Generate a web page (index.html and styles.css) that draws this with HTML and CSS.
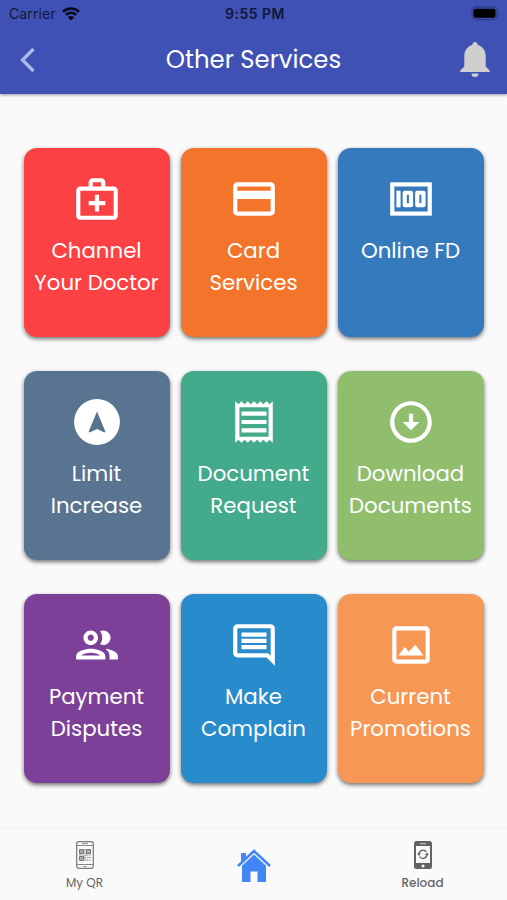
FILE: index.html
```html
<!DOCTYPE html>
<html lang="en">
<head>
    <meta charset="UTF-8">
    <meta name="viewport" content="width=device-width, initial-scale=1.0">
    <title>Other Services</title>
    <link rel="stylesheet" href="styles.css">
</head>
<body>

    <header class="header">
        <div class="status-bar">
            <div class="carrier">
                <span>Carrier</span>
                <svg width="18" height="14" viewBox="0 0 18 14">
                    <path d="M1 4.8a11.5 11.5 0 0 1 16 0M3.8 7.9a7.5 7.5 0 0 1 10.4 0" fill="none" stroke="#080a1c" stroke-width="2.5"/>
                    <path d="M5.8 10.2a4.6 4.6 0 0 1 6.4 0L9 13.5z" fill="#080a1c"/>
                </svg>
            </div>
            <span class="time">9:55 PM</span>
            <svg class="battery" width="30" height="15" viewBox="0 0 30 15">
                <rect x="1" y="1" width="25" height="12.5" rx="4" fill="none" stroke="#2f3c85" stroke-width="1.3"/>
                <rect x="2.5" y="2.7" width="22" height="9" rx="2" fill="#000"/>
                <path d="M27.5 5.2a2.5 2.5 0 0 1 0 4z" fill="#2f3c85"/>
            </svg>
        </div>
        <div class="title-bar">
            <svg class="back" width="16" height="26" viewBox="0 0 16 26">
                <path d="M13.5 2L2.5 13l11 11" fill="none" stroke="#a9b9ee" stroke-width="3.3"/>
            </svg>
            <h1>Other Services</h1>
            <svg class="bell" width="30" height="36" viewBox="0 0 30 36">
                <path d="M15 0a2.6 2.6 0 0 1 2.6 3c5 1.3 8.1 5.5 8.1 11v10.5l4 4V30H.3v-1.5l4-4V14c0-5.5 3.1-9.7 8.1-11A2.6 2.6 0 0 1 15 0zM11.5 31.5h7a3.5 3.5 0 0 1-7 0z" fill="#cfcfcf"/>
            </svg>
        </div>
    </header>

    <main class="services">
        <a class="card red">
            <svg class="icon" viewBox="0 0 24 24"><path d="M20 6h-4V4c0-1.1-.9-2-2-2h-4c-1.1 0-2 .9-2 2v2H4c-1.1 0-2 .9-2 2v12c0 1.1.9 2 2 2h16c1.1 0 2-.9 2-2V8c0-1.1-.9-2-2-2zM10 4h4v2h-4V4zm10 16H4V8h16v12zM11 10h2v3h3v2h-3v3h-2v-3H8v-2h3z"/></svg>
            <span>Channel<br>Your Doctor</span>
        </a>
        <a class="card orange">
            <svg class="icon" viewBox="0 0 24 24"><path d="M20 4H4c-1.11 0-2 .89-2 2v12c0 1.11.89 2 2 2h16c1.11 0 2-.89 2-2V6c0-1.11-.89-2-2-2zm0 14H4v-6h16v6zm0-10H4V6h16v2z"/></svg>
            <span>Card<br>Services</span>
        </a>
        <a class="card blue">
            <svg class="icon outline" viewBox="0 0 24 24">
                <rect x="3" y="5" width="18" height="14"/>
                <path d="M6 8v8"/>
                <rect x="9" y="9" width="3" height="6" stroke-linejoin="round"/>
                <rect x="15" y="9" width="3" height="6" stroke-linejoin="round"/>
            </svg>
            <span>Online FD</span>
        </a>
        <a class="card slate">
            <svg class="icon" viewBox="0 0 24 24"><path d="M12 1a11 11 0 1 0 0 22 11 11 0 1 0 0-22zm3.57 16L12 15.4 8.43 17 8 16.57 12 7l4 9.57-.43.43z"/></svg>
            <span>Limit<br>Increase</span>
        </a>
        <a class="card teal">
            <svg class="icon" viewBox="0 0 24 24"><path d="M19.5 3.5L18 2l-1.5 1.5L15 2l-1.5 1.5L12 2l-1.5 1.5L9 2 7.5 3.5 6 2 4.5 3.5 3 2v20l1.5-1.5L6 22l1.5-1.5L9 22l1.5-1.5L12 22l1.5-1.5L15 22l1.5-1.5L18 22l1.5-1.5L21 22V2l-1.5 1.5zM19 19.09H5V4.91h14v14.18zM6 15h12v2H6zm0-4h12v2H6zm0-4h12v2H6z"/></svg>
            <span>Document<br>Request</span>
        </a>
        <a class="card green">
            <svg class="icon" viewBox="0 0 24 24"><path d="M12 4c4.41 0 8 3.59 8 8s-3.59 8-8 8-8-3.59-8-8 3.59-8 8-8m0-2C6.48 2 2 6.48 2 12s4.48 10 10 10 10-4.48 10-10S17.52 2 12 2zm1 10V8h-2v4H8l4 4 4-4h-3z"/></svg>
            <span>Download<br>Documents</span>
        </a>
        <a class="card purple">
            <svg class="icon" viewBox="0 0 24 24"><path d="M9 13.75c-2.34 0-7 1.17-7 3.5V19h14v-1.75c0-2.33-4.66-3.5-7-3.5zM4.34 17c.84-.58 2.87-1.25 4.66-1.25s3.82.67 4.66 1.25H4.34zM9 12c1.93 0 3.5-1.57 3.5-3.5S10.93 5 9 5 5.5 6.57 5.5 8.5 7.07 12 9 12zm0-5c.83 0 1.5.67 1.5 1.5S9.83 10 9 10s-1.5-.67-1.5-1.5S8.17 7 9 7zm7.04 6.81c1.16.84 1.96 1.96 1.96 3.44V19h4v-1.75c0-2.02-3.5-3.17-5.96-3.44zM15 12c1.93 0 3.5-1.57 3.5-3.5S16.93 5 15 5c-.54 0-1.04.13-1.5.35.63.89 1 1.98 1 3.15s-.37 2.26-1 3.15c.46.22.96.35 1.5.35z"/></svg>
            <span>Payment<br>Disputes</span>
        </a>
        <a class="card sky">
            <svg class="icon" viewBox="0 0 24 24"><path d="M22 4c0-1.1-.9-2-2-2H4c-1.1 0-2 .9-2 2v12c0 1.1.9 2 2 2h14l4 4V4zM20 4v13.17L18.83 16H4V4h16zM6 12h12v2H6zm0-3h12v2H6zm0-3h12v2H6z"/></svg>
            <span>Make<br>Complain</span>
        </a>
        <a class="card peach">
            <svg class="icon" viewBox="0 0 24 24"><path d="M19 5v14H5V5h14m0-2H5c-1.1 0-2 .9-2 2v14c0 1.1.9 2 2 2h14c1.1 0 2-.9 2-2V5c0-1.1-.9-2-2-2zM6 17l3-4 1.85 2.2L14.1 11.86 18 17z"/></svg>
            <span>Current<br>Promotions</span>
        </a>
    </main>

    <nav class="tab-bar">
        <a class="tab">
            <svg width="18" height="28" viewBox="0 0 18 28">
                <rect x=".7" y=".7" width="16.6" height="26.6" rx="2.2" fill="none" stroke="#777" stroke-width="1.2"/>
                <path d="M1 4.5h16M1 23.5h16M6 2.6h6M7.5 25.5h3" stroke="#888" stroke-width="1"/>
                <path d="M3.5 8.5h4v4h-4zM10.5 8.5h4v4h-4zM3.5 15.5h4v4h-4z" fill="#aaa" stroke="#777"/>
                <path d="M9 8v12M10 14h5M11 16.5h4M10 19h5M3 14h5" stroke="#888" stroke-width="1.2" stroke-dasharray="2 .7"/>
            </svg>
            <span>My QR</span>
        </a>
        <a class="tab home">
            <svg width="34" height="33" viewBox="0 0 34 33">
                <path d="M4 4h5v4.5L4 13.5z" fill="#4285f4"/>
                <path d="M1 17L17 2l16 15" fill="none" stroke="#4285f4" stroke-width="2.6"/>
                <path d="M17 5.5l12 11.3V33h-8.5V22.5h-7V33H5V16.8z" fill="#4285f4"/>
            </svg>
        </a>
        <a class="tab reload">
            <svg width="18" height="28" viewBox="0 0 18 28">
                <path d="M2.5 0h13A2.5 2.5 0 0 1 18 2.5v23a2.5 2.5 0 0 1-2.5 2.5h-13A2.5 2.5 0 0 1 0 25.5v-23A2.5 2.5 0 0 1 2.5 0z" fill="#636363"/>
                <path d="M2 5h14v17H2z" fill="#fafafa"/>
                <path d="M6 2.7h6" stroke="#ccc" stroke-width="1"/>
                <circle cx="9" cy="25" r="1.5" fill="#fafafa"/>
                <path d="M5 13.2a4 4 0 0 1 7.4-2.2M13 13.3a4 4 0 0 1-7.4 2.2" fill="none" stroke="#636363" stroke-width="1.3"/>
                <path d="M3 12.5h4l-2 2.6zM11 14h4l-2-2.6z" fill="#636363"/>
            </svg>
            <span>Reload</span>
        </a>
    </nav>

</body>
</html>
```
FILE: styles.css
```css
* {
    box-sizing: border-box;
}

body {
    margin: 0;
    height: 900px;
    display: flex;
    flex-direction: column;
    font-family: 'Poppins', 'Inter', sans-serif;
    background-color: #fafafa;
    overflow: hidden;
}

.header {
    height: 94px;
    background-color: #3f51b5;
    box-shadow: 0 1px 3px rgba(0, 0, 0, 0.4);
}

.status-bar {
    display: grid;
    grid-template-columns: 1fr auto 1fr;
    align-items: center;
    height: 27px;
    padding: 0 6px 0 9px;
    font-family: 'Inter', sans-serif;
    font-size: 14px;
    color: #101738;
}

.carrier {
    display: flex;
    align-items: center;
    gap: 6px;
    letter-spacing: 0.1px;
}

.time {
    font-weight: 600;
    font-size: 14px;
    letter-spacing: 0.5px;
}

.battery {
    justify-self: end;
}

.title-bar {
    display: grid;
    grid-template-columns: 30px 1fr 30px;
    align-items: center;
    height: 66px;
    padding: 0 17px 0 20px;
}

.title-bar h1 {
    margin: 0 3px 1px 0;
    text-align: center;
    font-size: 24.4px;
    font-weight: 400;
    color: white;
}

.services {
    flex: 1;
    display: grid;
    grid-template-columns: repeat(3, 146px);
    grid-auto-rows: 189px;
    justify-content: center;
    column-gap: 11px;
    row-gap: 34px;
    padding-top: 54px;
}

.card {
    display: flex;
    flex-direction: column;
    align-items: center;
    padding-top: 26px;
    border-radius: 13px;
    box-shadow: 0 2px 4px rgba(0, 0, 0, 0.55);
    color: white;
    font-size: 21.3px;
    line-height: 32px;
    text-align: center;
    white-space: nowrap;
}

.icon {
    width: 50px;
    height: 50px;
    margin-bottom: 11px;
    fill: white;
}

.outline {
    fill: none;
    stroke: white;
    stroke-width: 2;
}

.red { background-color: #fb4143; }
.orange { background-color: #f3742b; }
.blue { background-color: #357abd; }
.slate { background-color: #587490; }
.teal { background-color: #43aa8b; }
.green { background-color: #90be6d; }
.purple { background-color: #7d4098; }
.sky { background-color: #288bcc; }
.peach { background-color: #f79755; }

.tab-bar {
    display: grid;
    grid-template-columns: repeat(3, 1fr);
    height: 72px;
    border-top: 1px solid #f3f3f3;
}

.tab {
    display: flex;
    flex-direction: column;
    align-items: center;
    padding-top: 12px;
    gap: 5px;
    font-size: 12px;
    line-height: 18px;
    color: #666;
}

.home {
    padding-top: 20px;
}

.reload {
    font-weight: 500;
}
```
